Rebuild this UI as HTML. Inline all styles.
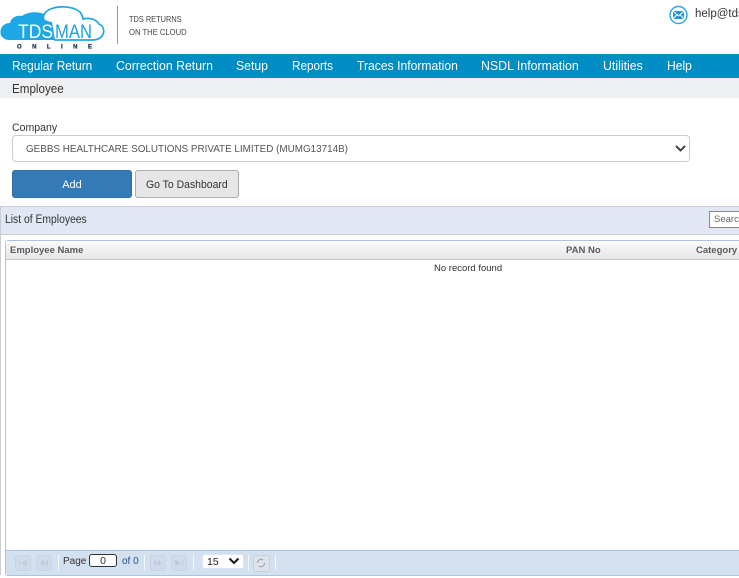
<!DOCTYPE html>
<html><head><meta charset="utf-8"><style>
html,body{margin:0;padding:0;background:#fff}
body{width:739px;height:578px;overflow:hidden;position:relative;font-family:"Liberation Sans",sans-serif;color:#333}
.a{position:absolute;white-space:nowrap;transform-origin:0 0}
.n{color:#fff;font-size:13px;top:58px;line-height:16px}
.sep{position:absolute;top:555px;width:1px;height:15px;background:#f4f7fb}
.pb{position:absolute;top:555px;width:14px;height:14px;background:#cfdaea;border:1px solid #c8d4e6;border-radius:3px}
.pb svg{display:block;margin:4px 0 0 3px}
</style></head><body>
<svg class="a" style="left:0;top:0" width="110" height="52" viewBox="0 0 110 52">
<path d="M55 40C47 30 40 20 45 13 50 6 70 4 80 12 82 15 83 17 83 19 90 17 97 20 99 24 104 26 105 32 102 36 100 39 97 40 92 40Z" fill="#fff" stroke="#1ea7e6" stroke-width="1.700"/>
<path d="M55 40H8C2 39-1 34 1 29 2 25 6 23 10 23 11 18 16 15 22 16 27 12 37 11 44 14 42 18 44 21 52 22L55 40Z" fill="#1ea7e6"/>
<text x="18" y="38" font-family="Liberation Sans" font-size="19.500" fill="#fff" textLength="35" lengthAdjust="spacingAndGlyphs">TDS</text>
<text x="55" y="38" font-family="Liberation Sans" font-size="19.500" fill="#1e9fdc" textLength="37" lengthAdjust="spacingAndGlyphs">MAN</text>
<text x="17" y="48.500" font-family="Liberation Sans" font-size="6" font-weight="bold" fill="#23446b" textLength="75" stroke="#23446b" stroke-width=".3">ONLINE</text>
</svg>
<div class="a" style="left:117px;top:6px;width:1px;height:38px;background:#999"></div>
<div class="a" style="left:129px;top:13px;font-size:8.500px;line-height:13px;color:#444;transform:scaleX(.87)">TDS RETURNS</div>
<div class="a" style="left:129px;top:26px;font-size:8.500px;line-height:13px;color:#444;transform:scaleX(.9)">ON THE CLOUD</div>
<svg class="a" style="left:669px;top:5px" width="20" height="20" viewBox="0 0 20 20">
<circle cx="9.500" cy="10" r="8.500" fill="#fff" stroke="#2aa8e4" stroke-width="1.400"/>
<path d="M4 6H15V14H4Z" fill="#2196d3"/><path d="M4 6L9.500 11 15 6M4 14L8 9.500M15 14L11 9.500" fill="none" stroke="#fff" stroke-width="1"/>
</svg>
<div class="a" style="left:695px;top:7px;font-size:11.500px;line-height:14px;color:#333">help@tds</div>

<div class="a" style="left:0;top:54px;width:739px;height:24px;background:#008dc3"></div>
<div class="a n" style="left:12px;transform:scaleX(.91)">Regular Return</div>
<div class="a n" style="left:116px;transform:scaleX(.945)">Correction Return</div>
<div class="a n" style="left:236px;transform:scaleX(.94)">Setup</div>
<div class="a n" style="left:292px;transform:scaleX(.9)">Reports</div>
<div class="a n" style="left:357px;transform:scaleX(.935)">Traces Information</div>
<div class="a n" style="left:481px;transform:scaleX(.95)">NSDL Information</div>
<div class="a n" style="left:603px;transform:scaleX(.95)">Utilities</div>
<div class="a n" style="left:667px;transform:scaleX(.93)">Help</div>

<div class="a" style="left:0;top:78px;width:739px;height:20px;background:#eeeff1"></div>
<div class="a" style="left:12px;top:82px;font-size:12.500px;line-height:15px;color:#333;transform:scaleX(.93)">Employee</div>

<div class="a" style="left:12px;top:121px;font-size:11px;line-height:14px;color:#333;transform:scaleX(.96)">Company</div>
<div class="a" style="left:12px;top:135px;width:676px;height:25px;border:1px solid #ccc;border-radius:4px;background:#fff"></div>
<div class="a" style="left:26px;top:142px;font-size:10.500px;line-height:14px;color:#555;transform:scaleX(.94)">GEBBS HEALTHCARE SOLUTIONS PRIVATE LIMITED (MUMG13714B)</div>
<svg class="a" style="left:674px;top:144px" width="13" height="9" viewBox="0 0 13 9"><path d="M2 2L6.500 6.500 11 2" fill="none" stroke="#444" stroke-width="2"/></svg>

<div class="a" style="left:12px;top:170px;width:118px;height:26px;border:1px solid #2e6da4;border-radius:3px;background:#337ab7;color:#fff;font-size:11px;line-height:28px;text-align:center">Add</div>
<div class="a" style="left:135px;top:170px;width:102px;height:26px;border:1px solid #adadad;border-radius:3px;background:#e6e6e6"></div>
<div class="a" style="left:146px;top:172px;color:#333;font-size:11px;line-height:27px;transform:scaleX(.95)">Go To Dashboard</div>

<div class="a" style="left:0;top:206px;width:739px;height:27px;background:#e1e8f4;border-top:1px solid #c8cdd4;border-bottom:1px solid #c8cdd4;border-left:1px solid #c8cdd4"></div>
<div class="a" style="left:5px;top:213px;font-size:11.500px;line-height:14px;color:#333;transform:scaleX(.9)">List of Employees</div>
<div class="a" style="left:709px;top:211px;width:40px;height:15px;background:#fff;border:1px solid #888;font-size:9.500px;line-height:15px;color:#666;text-indent:4px">Search</div>

<div class="a" style="left:0;top:235px;width:1px;height:340px;background:#c8cdd4"></div>
<div class="a" style="left:5px;top:240px;width:740px;height:334px;border:1px solid #a9c4e6;border-radius:3px 0 0 3px;background:#fff"></div>
<div class="a" style="left:6px;top:241px;width:733px;height:18px;background:linear-gradient(#fbfbfb,#e6e6e6);border-bottom:1px solid #c5c5c5"></div>
<div class="a" style="left:10px;top:245px;font-size:9.500px;font-weight:bold;line-height:12px;color:#5b5b5b">Employee Name</div>
<div class="a" style="left:566px;top:245px;font-size:9.500px;font-weight:bold;line-height:12px;color:#5b5b5b">PAN No</div>
<div class="a" style="left:696px;top:245px;font-size:9.500px;font-weight:bold;line-height:12px;color:#5b5b5b">Category</div>
<div class="a" style="left:434px;top:263px;font-size:9.500px;line-height:12px;color:#333">No record found</div>

<div class="a" style="left:6px;top:550px;width:733px;height:24px;background:#d3e0f0;border-top:1px solid #a9c4e6"></div>
<div class="pb" style="left:15px"><svg width="8" height="6"><path d="M.5 0V6M8 0L3 3 8 6Z" fill="#c0cad8" stroke="#c0cad8" stroke-width=".8"/></svg></div>
<div class="pb" style="left:36px"><svg width="8" height="6"><path d="M4 0L0 3 4 6ZM8 0L4 3 8 6Z" fill="#c0cad8"/></svg></div>
<div class="sep" style="left:58px"></div>
<div class="a" style="left:63px;top:556px;font-size:10px;line-height:12px;color:#333">Page</div>
<div class="a" style="left:89px;top:554px;width:26px;height:11px;border:1px solid #333;border-radius:3px;background:#fff;font-size:10.500px;line-height:12px;text-align:center;color:#333">0</div>
<div class="a" style="left:122px;top:556px;font-size:10px;line-height:12px;color:#2d4f80">of 0</div>
<div class="sep" style="left:144px"></div>
<div class="pb" style="left:150px"><svg width="8" height="6"><path d="M0 0L4 3 0 6ZM4 0L8 3 4 6Z" fill="#c0cad8"/></svg></div>
<div class="pb" style="left:171px"><svg width="8" height="6"><path d="M7.500 0V6M0 0L5 3 0 6Z" fill="#c0cad8" stroke="#c0cad8" stroke-width=".8"/></svg></div>
<div class="sep" style="left:193px"></div>
<div class="a" style="left:202px;top:554px;width:40px;height:13px;background:#fff;border:1px solid #dfe6f0;border-radius:3px;font-size:10.500px;line-height:14px;color:#222;text-indent:4px">15</div>
<svg class="a" style="left:228px;top:557px" width="12" height="8" viewBox="0 0 12 8"><path d="M1.500 1.500L6 6 10.500 1.500" fill="none" stroke="#111" stroke-width="2"/></svg>
<div class="sep" style="left:248px"></div>
<div class="a" style="left:253px;top:555px;width:15px;height:15px;background:#dde3ec;border:1px solid #c8d0dc;border-radius:3px"></div>
<svg class="a" style="left:254px;top:556px" width="14" height="14" viewBox="0 0 14 14"><path d="M3.500 7A3.500 3.500 0 0 1 9 4M10.500 7A3.500 3.500 0 0 1 5 10" fill="none" stroke="#aaa" stroke-width="1.300"/></svg>
<div class="sep" style="left:275px"></div>
</body></html>
